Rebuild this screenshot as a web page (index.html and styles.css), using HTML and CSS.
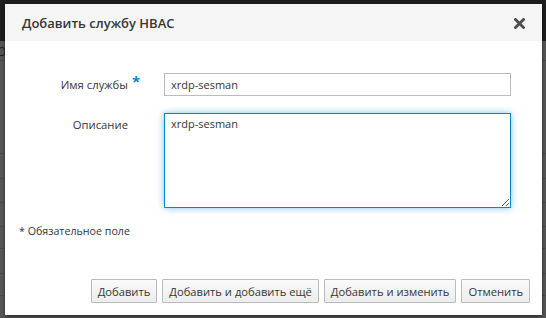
FILE: index.html
```html
<!DOCTYPE html>
<html lang="ru">
<head>
<meta charset="utf-8">
<link rel="stylesheet" href="styles.css">
</head>
<body>
<div class="page">
  <div class="page-top"></div>
  <div class="page-rows">
    <div class="prow r1"><span class="ptext">О</span></div>
    <div class="prow r2"></div>
    <div class="prow r3"></div>
    <div class="prow r4"></div>
    <div class="prow r5"></div>
    <div class="prow r6"></div>
    <div class="prow r7"></div>
    <div class="prow r8"></div>
  </div>
</div>
<div class="modal">
  <div class="modal-header">
    <h4 class="modal-title">Добавить службу HBAC</h4>
    <span class="close" aria-label="Закрыть">
      <svg width="11" height="11" viewBox="0 0 11 11"><path d="M1.5 1.5 L9.5 9.5 M9.5 1.5 L1.5 9.5" stroke="#4d4d4d" stroke-width="2.8" stroke-linecap="square"/></svg>
    </span>
  </div>
  <div class="modal-body">
    <div class="form-row">
      <label class="label">Имя службы</label>
      <span class="req">*</span>
      <input class="field" type="text" value="xrdp-sesman">
    </div>
    <div class="form-row top">
      <label class="label">Описание</label>
      <span class="req"></span>
      <textarea class="field area">xrdp-sesman</textarea>
    </div>
    <div class="required-note">* Обязательное поле</div>
  </div>
  <div class="modal-footer">
    <button class="btn">Добавить</button>
    <button class="btn">Добавить и добавить ещё</button>
    <button class="btn">Добавить и изменить</button>
    <button class="btn">Отменить</button>
  </div>
</div>
</body>
</html>
```
FILE: styles.css
```css
html, body {
  margin: 0;
  padding: 0;
  width: 546px;
  height: 318px;
  overflow: hidden;
  font-family: "Open Sans", "Noto Sans", sans-serif;
}
.page {
  width: 546px;
  height: 318px;
  background: #575757;
  display: flex;
  flex-direction: column;
}
.page-top {
  height: 41px;
  background: #1e1e1e;
  flex: none;
}
.page-rows {
  display: flex;
  flex-direction: column;
}
.prow {
  border-bottom: 1px solid #4a4a4a;
  box-sizing: border-box;
}
.r1 { height: 20px; position: relative; }
.r2 { height: 93px; }
.r3 { height: 25px; }
.r4 { height: 24px; }
.r5 { height: 24px; }
.r6 { height: 22px; }
.r7 { height: 25px; }
.r8 { height: 22px; }
.ptext {
  position: absolute;
  left: -3px;
  top: 2px;
  font-size: 12px;
  color: #222;
}
.modal {
  position: absolute;
  left: 5px;
  top: 4px;
  width: 537px;
  height: 311px;
  background: #fff;
  box-shadow: 0 2px 4px rgba(0,0,0,0.5);
  display: flex;
  flex-direction: column;
}
.modal-header {
  height: 37px;
  background: #f5f5f5;
  display: flex;
  align-items: center;
  justify-content: space-between;
  padding: 0 17px 0 17px;
  box-sizing: border-box;
  flex: none;
}
.modal-title {
  margin: 0;
  font-size: 13px;
  font-weight: 600;
  color: #363636;
}
.close {
  display: flex;
  margin-top: 1px;
}
.modal-body {
  padding: 32px 31px 0 0;
  flex: 1;
}
.form-row {
  display: flex;
  align-items: center;
  margin-bottom: 17px;
}
.form-row.top {
  align-items: flex-start;
  margin-bottom: 16px;
}
.label {
  width: 123px;
  text-align: right;
  font-size: 11.3px;
  color: #363636;
}
.form-row.top .label {
  padding-top: 4px;
}
.req {
  width: 36px;
  box-sizing: border-box;
  padding-left: 4px;
  color: #0088ce;
  font-size: 15px;
  font-weight: 700;
  line-height: 12px;
  height: 12px;
  align-self: flex-start;
  margin-top: 2px;
}
.field {
  flex: 1;
  margin: 0;
  height: 23px;
  box-sizing: border-box;
  border: 1px solid #bbb;
  padding: 2px 6px;
  font-family: "Open Sans", "Noto Sans", sans-serif;
  font-size: 11px;
  color: #363636;
  background: #fff;
  outline: none;
}
.area {
  height: 95px;
  border-color: #0088ce;
  box-shadow: 0 0 7px rgba(0,136,206,0.5);
  resize: vertical;
  padding: 2px 6px;
}
.required-note {
  font-size: 10.7px;
  color: #363636;
  padding-left: 14px;
  margin-top: 1px;
}
.modal-footer {
  display: flex;
  justify-content: flex-end;
  gap: 5px;
  padding: 0 12px 12px 0;
}
.btn {
  margin: 0;
  height: 24px;
  padding: 0 6px;
  font-family: "Open Sans", "Noto Sans", sans-serif;
  font-size: 11.2px;
  color: #363636;
  background: linear-gradient(#fafafa, #ededed);
  border: 1px solid #bbb;
  border-radius: 1px;
}
```
